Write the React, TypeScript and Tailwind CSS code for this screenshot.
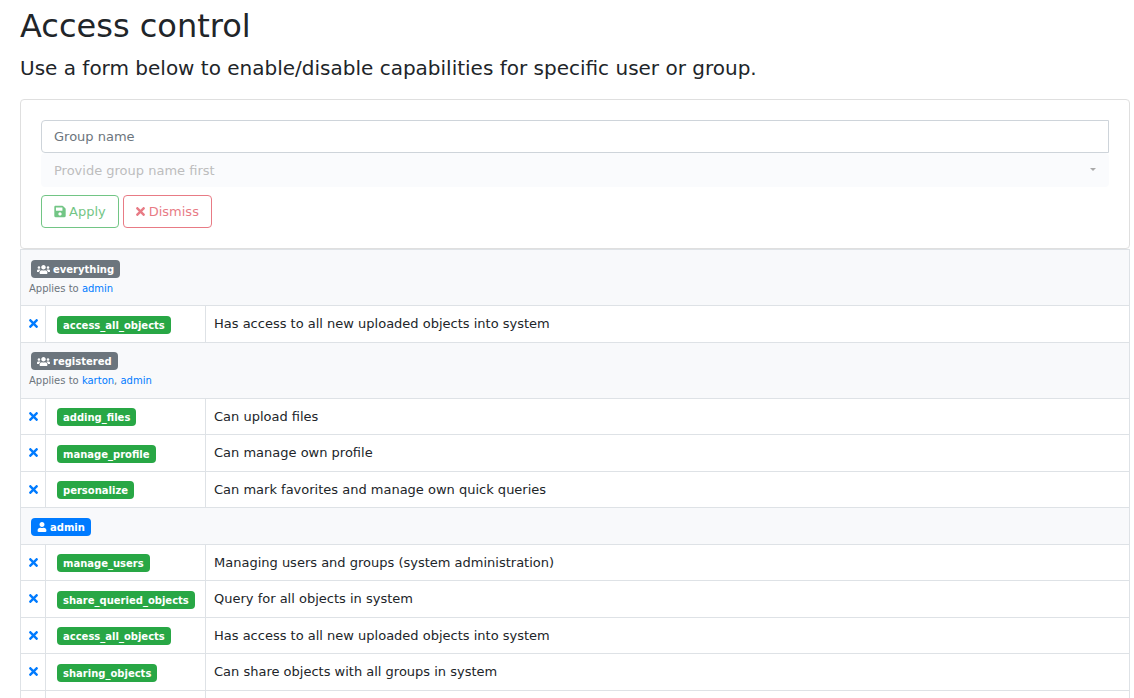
import { FaSave, FaTimes, FaUser, FaUsers } from "react-icons/fa";

type Capability = { name: string; description: string };
type Group = {
  name: string;
  kind: "group" | "user";
  members: string[];
  capabilities: Capability[];
};

const groups: Group[] = [
  {
    name: "everything",
    kind: "group",
    members: ["admin"],
    capabilities: [
      {
        name: "access_all_objects",
        description: "Has access to all new uploaded objects into system",
      },
    ],
  },
  {
    name: "registered",
    kind: "group",
    members: ["karton", "admin"],
    capabilities: [
      { name: "adding_files", description: "Can upload files" },
      { name: "manage_profile", description: "Can manage own profile" },
      {
        name: "personalize",
        description: "Can mark favorites and manage own quick queries",
      },
    ],
  },
  {
    name: "admin",
    kind: "user",
    members: [],
    capabilities: [
      {
        name: "manage_users",
        description: "Managing users and groups (system administration)",
      },
      {
        name: "share_queried_objects",
        description: "Query for all objects in system",
      },
      {
        name: "access_all_objects",
        description: "Has access to all new uploaded objects into system",
      },
      {
        name: "sharing_objects",
        description: "Can share objects with all groups in system",
      },
    ],
  },
];

function GroupBadge({ name, kind }: Pick<Group, "name" | "kind">) {
  const Icon = kind === "user" ? FaUser : FaUsers;
  return (
    <a
      href={`#${name}`}
      className={`ml-0.5 inline-flex h-[18px] items-center gap-[3px] rounded px-1.5 pt-px text-[10px] font-bold text-white ${
        kind === "user" ? "bg-[#007bff]" : "bg-[#6c757d]"
      }`}
    >
      <Icon aria-hidden className={kind === "user" ? "size-[10px]" : "h-[11px] w-[13px]"} />
      {name}
    </a>
  );
}

function GroupRows({ group }: { group: Group }) {
  return (
    <>
      <tr className="bg-[#f8f9fb]">
        <th colSpan={3} scope="colgroup" className="border border-[#dee2e6] px-2 py-2 text-left font-normal">
          <div className="flex h-[1.5em] items-end">
            <GroupBadge name={group.name} kind={group.kind} />
          </div>
          {group.members.length > 0 && (
            <div className="h-[1.5em] text-[#6c757d]">
              <small className="text-[10px]">
                Applies to{" "}
                {group.members.map((member, i) => (
                  <span key={member}>
                    {i > 0 && ", "}
                    <a href={`#${member}`} className="text-[#007bff]">
                      {member}
                    </a>
                  </span>
                ))}
              </small>
            </div>
          )}
        </th>
      </tr>
      {group.capabilities.map((capability) => (
        <tr key={capability.name}>
          <td className="border border-[#dee2e6] py-2 pr-[5px] pl-1.5">
            <button type="button" aria-label={`Remove ${capability.name}`} className="block text-[#007bff]">
              <FaTimes aria-hidden className="size-[13px]" />
            </button>
          </td>
          <td className="border border-[#dee2e6] pr-2.5 pl-[11px]">
            <div className="flex h-[1.5em] items-end">
              <span className="inline-flex h-[18px] items-center rounded bg-[#28a745] px-1.5 pt-px text-[10px] font-bold text-white">
                {capability.name}
              </span>
            </div>
          </td>
          <td className="border border-[#dee2e6] px-2 py-2">{capability.description}</td>
        </tr>
      ))}
    </>
  );
}

export default function App() {
  return (
    <main className="bg-white pt-[7px] pr-1 pl-5 font-['DejaVu_Sans',sans-serif] text-[13px] leading-normal text-[#212529]">
      <h2 className="mb-2 text-[32px] leading-[38px]">Access control</h2>
      <p className="mb-4 text-[20px] leading-[30px]">
        Use a form below to enable/disable capabilities for specific user or group.
      </p>
      <form className="rounded border border-[#dfdfdf] p-5">
        <input
          type="text"
          aria-label="Group name"
          placeholder="Group name"
          className="block h-[33px] w-full rounded-l border border-[#ced4da] px-3 placeholder:text-[#6c757d]"
        />
        <div className="relative">
          <select
            disabled
            aria-label="Capability"
            className="block h-[34px] w-full appearance-none rounded border border-[#fafbfd] bg-[#fafbfd] px-3 pt-0.5 text-[#bdbdbd] opacity-100"
          >
            <option>Provide group name first</option>
          </select>
          <svg
            aria-hidden="true"
            viewBox="0 0 6 3"
            className="pointer-events-none absolute top-[15px] right-[13px] h-[3px] w-1.5"
          >
            <path d="M0 0h6L3 3z" fill="#a9a9a9" />
          </svg>
        </div>
        <div className="mt-2 flex gap-1">
          <button
            type="button"
            disabled
            className="flex h-[33px] items-center gap-[3px] rounded border border-[#28a745] px-3 text-[#28a745] opacity-65"
          >
            <FaSave aria-hidden className="h-[13px] w-3" />
            Apply
          </button>
          <button
            type="button"
            disabled
            className="flex h-[33px] items-center gap-[3px] rounded border border-[#dc3545] px-[11px] pr-3 text-[#dc3545] opacity-65"
          >
            <FaTimes aria-hidden className="h-[13px] w-[11px]" />
            Dismiss
          </button>
        </div>
      </form>
      <table className="w-full border-collapse border border-[#dee2e6]">
        <colgroup>
          <col className="w-[25px]" />
          <col className="w-[160px]" />
          <col />
        </colgroup>
        <tbody>
          {groups.map((group) => (
            <GroupRows key={group.name} group={group} />
          ))}
          <tr className="h-9">
            <td className="border border-[#dee2e6]" />
            <td className="border border-[#dee2e6]" />
            <td className="border border-[#dee2e6]" />
          </tr>
        </tbody>
      </table>
    </main>
  );
}
